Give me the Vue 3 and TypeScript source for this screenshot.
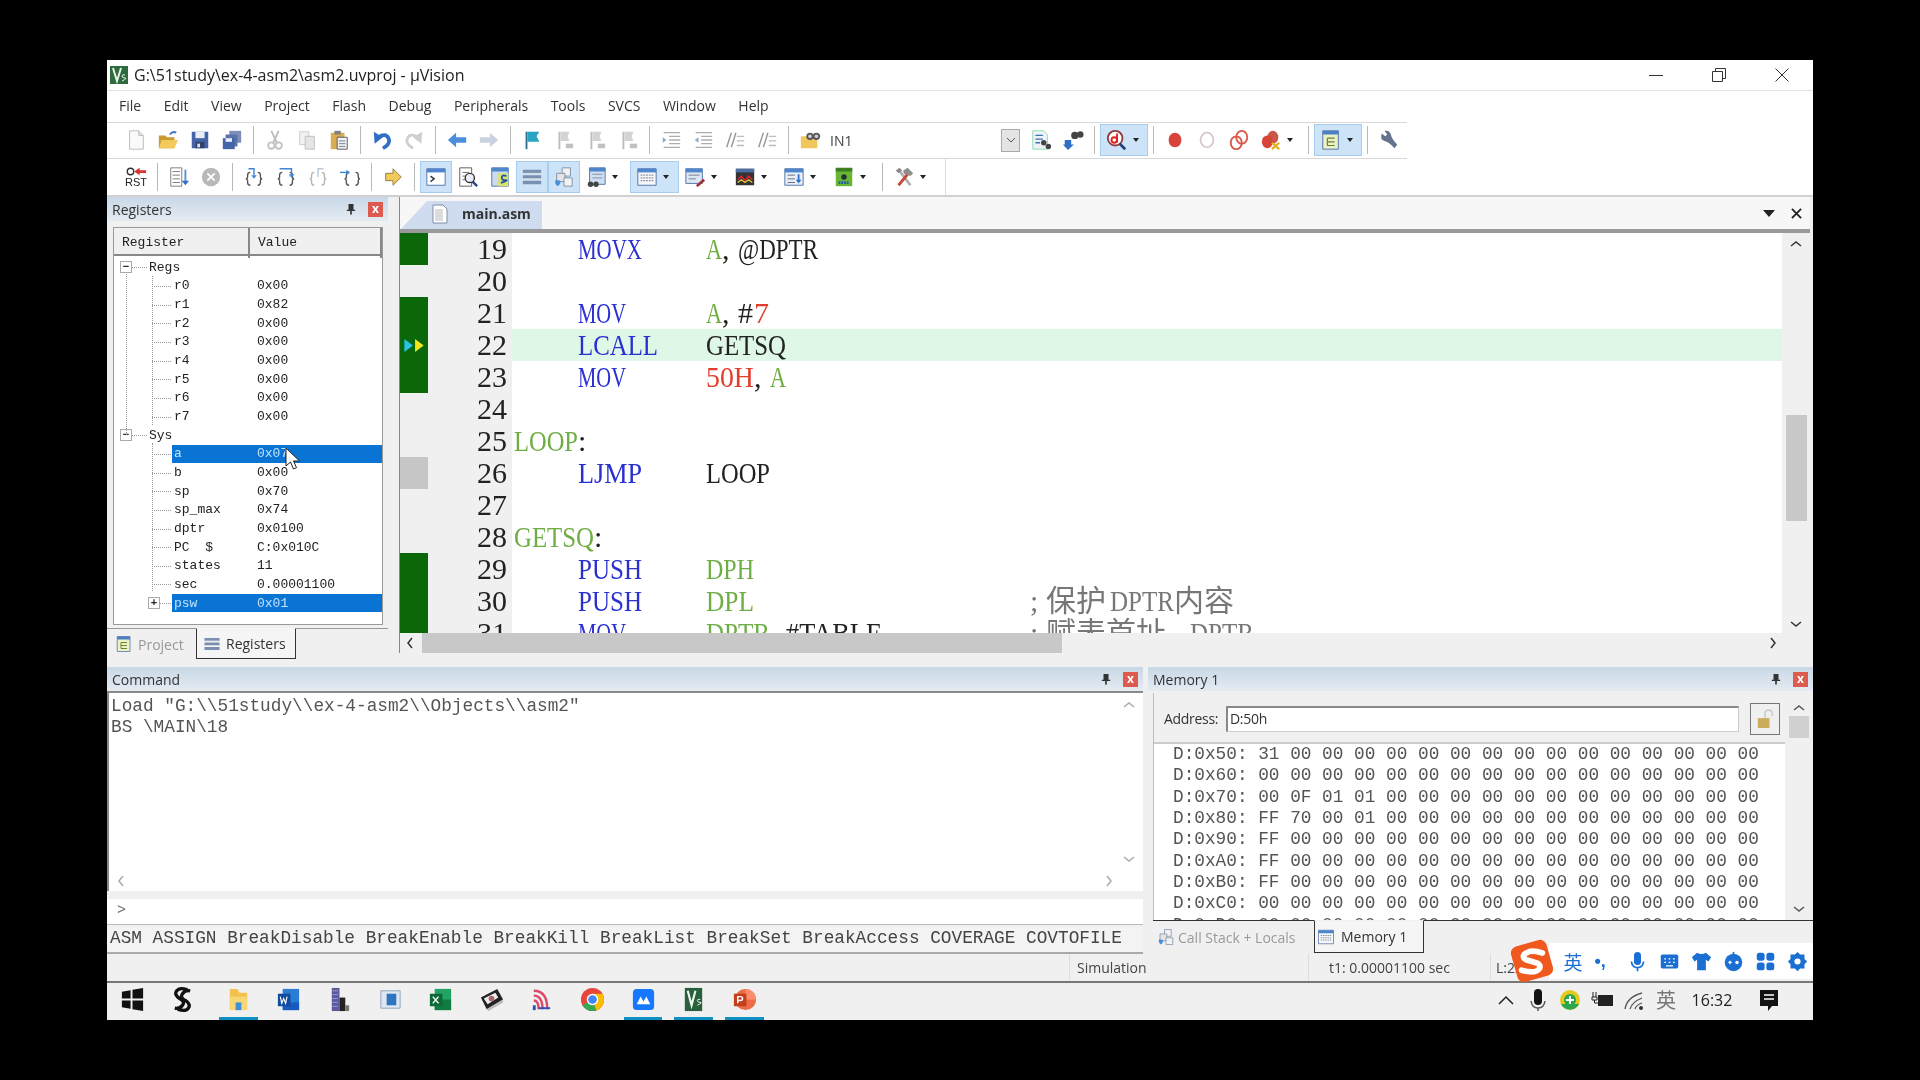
<template>
  <div class="screen">
    <!-- icon sprite -->
    <svg class="sprite" aria-hidden="true">
      <defs>
        <symbol id="new" viewBox="0 0 24 24"><path d="M5 2h10l5 5v15H5z" fill="#fafafa" stroke="#b9b9b9"/><path d="M15 2v5h5" fill="#e4e4e4" stroke="#b9b9b9"/></symbol>
        <symbol id="open" viewBox="0 0 24 24"><path d="M2 7h7l2 2h8v12H2z" fill="#c99a2e"/><path d="M5 12h18l-4 9H2z" fill="#f3c95c"/><path d="M14 6q3-4 7-2" stroke="#3b78c9" stroke-width="2" fill="none"/></symbol>
        <symbol id="save" viewBox="0 0 24 24"><path d="M3 3h18v18H3z" fill="#4564a8"/><path d="M7 3h10v7H7z" fill="#e8eef8"/><path d="M7 14h10v7H7z" fill="#30436f"/><path d="M9 16h3v4H9z" fill="#d8dfeb"/></symbol>
        <symbol id="saveall" viewBox="0 0 24 24"><path d="M9 2h13v13H9z" fill="#7d8fb8"/><path d="M5 6h13v13H5z" fill="#5a72aa"/><path d="M2 10h13v12H2z" fill="#4564a8"/><path d="M5 10h7v4H5z" fill="#e8eef8"/></symbol>
        <symbol id="cut" viewBox="0 0 24 24"><path d="M8 2l6 13M16 2l-6 13" stroke="#bdbdbd" stroke-width="2"/><circle cx="8" cy="18" r="3.500" fill="none" stroke="#c2c2c2" stroke-width="2"/><circle cx="16" cy="18" r="3.500" fill="none" stroke="#c2c2c2" stroke-width="2"/></symbol>
        <symbol id="copy" viewBox="0 0 24 24"><path d="M4 3h10v14H4z" fill="#f2f2f2" stroke="#c9c9c9"/><path d="M10 8h10v14H10z" fill="#e5e5e5" stroke="#bdbdbd"/></symbol>
        <symbol id="paste" viewBox="0 0 24 24"><path d="M3 4h15v18H3z" fill="#d9ad50"/><path d="M7 2h7v4H7z" fill="#7f7f7f"/><path d="M10 9h11v13H10z" fill="#eef1f6" stroke="#556"/><path d="M12 13h7M12 16h7M12 19h7" stroke="#778"/></symbol>
        <symbol id="undo" viewBox="0 0 24 24"><path d="M8 9q8-5 11 1t-6 11" fill="none" stroke="#2f6fc4" stroke-width="4"/><path d="M3 3l1 13 9-7z" fill="#2f6fc4"/></symbol>
        <symbol id="redo" viewBox="0 0 24 24"><path d="M16 9q-8-5-11 1t6 11" fill="none" stroke="#cfcfcf" stroke-width="3"/><path d="M21 3l-1 13-9-7z" fill="#cfcfcf"/></symbol>
        <symbol id="back" viewBox="0 0 24 24"><path d="M2 12l9-8v5h11v6H11v5z" fill="#4b8edb"/></symbol>
        <symbol id="fwd" viewBox="0 0 24 24"><path d="M22 12l-9-8v5H2v6h11v5z" fill="#c9d3df"/></symbol>
        <symbol id="flag" viewBox="0 0 24 24"><path d="M6 3v19" stroke="#2d6f8f" stroke-width="2"/><path d="M7 3h13l-3 5 3 6H7z" fill="#2ba4c4"/></symbol>
        <symbol id="flagg" viewBox="0 0 24 24"><path d="M7 3v19" stroke="#bdbdbd" stroke-width="2"/><path d="M8 3h10l-2 5 2 5H8z" fill="#d4d4d4"/><path d="M14 16h8v5h-8z" fill="#c2c2c2"/></symbol>
        <symbol id="indent" viewBox="0 0 24 24"><path d="M4 4h18M10 8h12M10 12h12M10 16h12M4 20h18" stroke="#adadad" stroke-width="1.500"/><path d="M3 9l4 3-4 3z" fill="#8aa9c9"/></symbol>
        <symbol id="outdent" viewBox="0 0 24 24"><path d="M4 4h18M10 8h12M10 12h12M10 16h12M4 20h18" stroke="#adadad" stroke-width="1.500"/><path d="M7 9l-4 3 4 3z" fill="#8aa9c9"/></symbol>
        <symbol id="slash" viewBox="0 0 24 24"><path d="M8 4L3 20M13 4L8 20" stroke="#9a9a9a" stroke-width="1.600"/><path d="M14 8h8M14 13h8M14 18h8" stroke="#bdbdbd" stroke-width="1.500"/></symbol>
        <symbol id="find" viewBox="0 0 24 24"><path d="M2 8h9l2 2h7v11H2z" fill="#f0c75a"/><circle cx="12" cy="8" r="4" fill="#555"/><circle cx="19" cy="8" r="4" fill="#555"/><circle cx="12" cy="8" r="2" fill="#ccd"/><circle cx="19" cy="8" r="2" fill="#ccd"/></symbol>
        <symbol id="docfind" viewBox="0 0 24 24"><path d="M3 2h12l4 4v16H3z" fill="#eef3fa" stroke="#8da"/><path d="M6 7h8M6 11h8M6 15h5" stroke="#3f6db2" stroke-width="1.400"/><circle cx="15" cy="15" r="3" fill="#444"/><circle cx="20" cy="19" r="3" fill="#444"/></symbol>
        <symbol id="binoc" viewBox="0 0 24 24"><path d="M3 12h7v5h3l-6.500 6L1 17h2z" fill="#2f6fc4"/><circle cx="14" cy="7" r="4" fill="#444"/><circle cx="20" cy="6" r="3.500" fill="#444"/></symbol>
        <symbol id="debug" viewBox="0 0 24 24"><circle cx="10" cy="10" r="8" fill="#fff" stroke="#8f3a3a" stroke-width="2"/><path d="M15 16l6 6" stroke="#24407d" stroke-width="3"/><circle cx="9" cy="12" r="3" fill="none" stroke="#e02020" stroke-width="2"/><path d="M12 5v10" stroke="#e02020" stroke-width="2"/></symbol>
        <symbol id="bp" viewBox="0 0 24 24"><ellipse cx="12" cy="12" rx="7" ry="8" fill="#d9443a"/></symbol>
        <symbol id="bpo" viewBox="0 0 24 24"><ellipse cx="12" cy="12" rx="7" ry="8" fill="#fff" stroke="#d8c8cc" stroke-width="2"/></symbol>
        <symbol id="bpc" viewBox="0 0 24 24"><ellipse cx="9" cy="15" rx="6" ry="7" fill="#fff" stroke="#d9574a" stroke-width="2"/><ellipse cx="15" cy="9" rx="6" ry="7" fill="none" stroke="#d9574a" stroke-width="2"/></symbol>
        <symbol id="bpx" viewBox="0 0 24 24"><ellipse cx="14" cy="9" rx="6" ry="7" fill="#c9574a"/><ellipse cx="8" cy="14" rx="6" ry="7" fill="#d9443a"/><path d="M13 15l8 7M21 15l-8 7" stroke="#e0b020" stroke-width="2.400"/></symbol>
        <symbol id="panel" viewBox="0 0 24 24"><path d="M3 2h17v20H3z" fill="#ecf1c8" stroke="#4d6fa8"/><path d="M3 2h17v4H3z" fill="#4d7fc4"/><path d="M8 10h8M8 14h8M8 18h8M8 10v8" stroke="#67822c" stroke-width="1.300"/></symbol>
        <symbol id="wrench" viewBox="0 0 24 24"><path d="M4 5l4 3 2-2-3-4q6-1 7 4t7 11l-3 4q-6-7-11-8T4 5z" fill="#64748f"/></symbol>
        <symbol id="list" viewBox="0 0 24 24"><path d="M3 2h12v20H3z" fill="#fff" stroke="#777"/><path d="M5 6h8M5 10h8M5 14h8M5 18h8" stroke="#777"/><path d="M19 4v14" stroke="#4b8edb" stroke-width="2"/><path d="M15 16h8l-4 5z" fill="#2f6fc4"/></symbol>
        <symbol id="stop" viewBox="0 0 24 24"><circle cx="12" cy="12" r="10" fill="#b9b9b9"/><path d="M8 8l8 8M16 8l-8 8" stroke="#fff" stroke-width="2"/></symbol>
        <symbol id="brace1" viewBox="0 0 24 24"><path d="M8 7q-3 0-3 3v2q0 2-2 2 2 0 2 2v2q0 3 3 3M16 7q3 0 3 3v2q0 2 2 2-2 0-2 2v2q0 3-3 3" fill="none" stroke="#555" stroke-width="1.500"/><path d="M6 3h6v7" fill="none" stroke="#3f84d6" stroke-width="1.500"/><path d="M9 10h6l-3 4z" fill="#3f84d6"/></symbol>
        <symbol id="brace2" viewBox="0 0 24 24"><path d="M8 7q-3 0-3 3v2q0 2-2 2 2 0 2 2v2q0 3 3 3M16 7q3 0 3 3v2q0 2 2 2-2 0-2 2v2q0 3-3 3" fill="none" stroke="#555" stroke-width="1.500"/><path d="M5 3h13v6" fill="none" stroke="#3f84d6" stroke-width="1.500"/><path d="M15 9h6l-3 4z" fill="#3f84d6"/></symbol>
        <symbol id="brace3" viewBox="0 0 24 24"><path d="M8 7q-3 0-3 3v2q0 2-2 2 2 0 2 2v2q0 3 3 3M16 7q3 0 3 3v2q0 2 2 2-2 0-2 2v2q0 3-3 3" fill="none" stroke="#b5b5b5" stroke-width="1.500"/><path d="M12 12V3h6" fill="none" stroke="#b8c9dc" stroke-width="1.500"/></symbol>
        <symbol id="brace4" viewBox="0 0 24 24"><path d="M11 7q-3 0-3 3v2q0 2-2 2 2 0 2 2v2q0 3 3 3M18 7q3 0 3 3v2q0 2 2 2-2 0-2 2v2q0 3-3 3" fill="none" stroke="#555" stroke-width="1.500"/><path d="M1 7h8" stroke="#3f84d6" stroke-width="1.500"/><path d="M8 4l4 3-4 3z" fill="#3f84d6"/></symbol>
        <symbol id="arrow" viewBox="0 0 24 24"><path d="M4 8h8V3l9 9-9 9v-5H4z" fill="#f0cb5c" stroke="#8f7a3a"/></symbol>
        <symbol id="cmdw" viewBox="0 0 24 24"><path d="M2 3h20v18H2z" fill="#fff" stroke="#4d6fa8"/><path d="M2 3h20v4H2z" fill="#4d86cc"/><path d="M6 11l4 3-4 3" fill="none" stroke="#333" stroke-width="1.500"/></symbol>
        <symbol id="dis" viewBox="0 0 24 24"><path d="M3 2h13v20H3z" fill="#fff" stroke="#555"/><path d="M6 7h7M6 11h7M6 15h7" stroke="#666"/><circle cx="14" cy="13" r="5" fill="#eef" stroke="#333" stroke-width="1.500"/><path d="M17 17l5 5" stroke="#24407d" stroke-width="2.500"/></symbol>
        <symbol id="sym" viewBox="0 0 24 24"><path d="M3 2h18v20H3z" fill="#cbdcf0" stroke="#4d6fa8"/><path d="M3 2h18v4H3z" fill="#4d86cc"/><path d="M10 8h11v14H10z" fill="#d8e46c"/><path d="M19 11q-5-2-5 1.500t4 3-5 3" fill="none" stroke="#2351a8" stroke-width="2"/></symbol>
        <symbol id="regs" viewBox="0 0 24 24"><path d="M2 4h20v4H2zM2 10h20v4H2zM2 16h20v4H2z" fill="#7b8fb3"/><path d="M2 8h20M2 14h20" stroke="#ddd"/></symbol>
        <symbol id="stack" viewBox="0 0 24 24"><path d="M10 2h9v9h-9z" fill="#f2f2f2" stroke="#7d8fa8"/><path d="M4 8h9v9H4z" fill="#e4e4e4" stroke="#7d8fa8"/><path d="M12 13h9v9h-9z" fill="#f2f2f2" stroke="#7d8fa8"/><path d="M3 15q-2 4 2 7 4-3 3-6z" fill="#4b8edb"/></symbol>
        <symbol id="watch" viewBox="0 0 24 24"><path d="M5 2h17v18H5z" fill="#cfe0f4" stroke="#4d6fa8"/><path d="M5 2h17v4H5z" fill="#4d86cc"/><path d="M8 9h11M8 13h11" stroke="#889"/><circle cx="6" cy="20" r="3" fill="#444"/><circle cx="12" cy="20" r="3" fill="#444"/></symbol>
        <symbol id="mem" viewBox="0 0 24 24"><path d="M2 3h20v18H2z" fill="#f7f7f7" stroke="#4d6fa8"/><path d="M2 3h20v4H2z" fill="#4d86cc"/><path d="M5 10h14M5 13h14M5 16h14" stroke="#8a94a8" stroke-dasharray="2 1" stroke-width="1.500"/></symbol>
        <symbol id="serial" viewBox="0 0 24 24"><path d="M2 3h18v16H2z" fill="#dce7f4" stroke="#4d6fa8"/><path d="M2 3h18v4H2z" fill="#4d86cc"/><path d="M5 10h12M5 14h8" stroke="#778"/><path d="M13 21l8-7 2 2-8 7z" fill="#a03030"/></symbol>
        <symbol id="ana" viewBox="0 0 24 24"><path d="M2 3h20v18H2z" fill="#333"/><path d="M2 3h20v4H2z" fill="#4d6fa8"/><path d="M4 15l4-4 4 5 4-5 4 4" fill="none" stroke="#d23" stroke-width="1.500"/><path d="M4 18l4-3 4 3 4-3 4 3" fill="none" stroke="#dc3" stroke-width="1.500"/></symbol>
        <symbol id="trace" viewBox="0 0 24 24"><path d="M2 3h20v18H2z" fill="#e7eef8" stroke="#4d6fa8"/><path d="M2 3h20v4H2z" fill="#4d86cc"/><path d="M5 10h8M5 14h8M5 18h8" stroke="#667"/><path d="M17 9v7" stroke="#2f6fc4" stroke-width="2"/><path d="M14 15h6l-3 4z" fill="#2f6fc4"/></symbol>
        <symbol id="sys" viewBox="0 0 24 24"><path d="M3 2h18v20H3z" fill="#6bb534"/><path d="M3 2h18v4H3z" fill="#3d7f22"/><circle cx="12" cy="12" r="3" fill="#233"/><path d="M6 18h12" stroke="#1f5fa8" stroke-width="3" stroke-dasharray="2 1"/></symbol>
        <symbol id="tools" viewBox="0 0 24 24"><path d="M6 4l13 17" stroke="#b0b0b0" stroke-width="3"/><path d="M3 5l4-3 3 3-4 3z" fill="#8b8b8b"/><path d="M16 9L6 21" stroke="#c9483d" stroke-width="3"/><path d="M11 5l5-3 6 6-3 3-4-2-3 0z" fill="#8f8f8f"/></symbol>
        <symbol id="rst" viewBox="0 0 24 24"><circle cx="6" cy="6" r="3.500" fill="#fff" stroke="#333" stroke-width="1.500"/><path d="M10 6l6-4v2.500h7v3h-7V10z" fill="#d9342b"/><text x="0" y="22" font-size="11" font-family="Liberation Sans, sans-serif" fill="#222" textLength="24" lengthAdjust="spacingAndGlyphs">RST</text></symbol>
        <symbol id="doc" viewBox="0 0 16 20"><path d="M1 1h10l4 4v14H1z" fill="#fff" stroke="#7d8fa8"/><path d="M3 5h8v12H3z" fill="#dcdcdc"/></symbol>
        <symbol id="pin" viewBox="0 0 12 14"><path d="M3 1h6v7h2v1.500H7V14H5V9.500H1V8h2z" fill="#333"/></symbol>
      </defs>
    </svg>

    <div class="window">
      <div class="titlebar">
        <svg class="app-icon" viewBox="0 0 18 18"><path d="M0 0h18v18H0z" fill="#2e6b3c"/><path d="M3 2l4 13 4-13" fill="none" stroke="#e8f2e8" stroke-width="2"/><path d="M15 9q-3-1-3 1t3 2-3 3" fill="none" stroke="#e8f2e8"/></svg>
        <span class="title">G:\51study\ex-4-asm2\asm2.uvproj - µVision</span>
        <div class="win-ctrls">
          <svg viewBox="0 0 14 14"><path d="M0 7.500h14" stroke="#333"/></svg>
          <svg viewBox="0 0 14 14"><path d="M.5 3.500h10v10H.5zM3.500 3.500v-3h10v10h-3" fill="none" stroke="#333"/></svg>
          <svg viewBox="0 0 14 14"><path d="M.5.500l13 13M13.500.500l-13 13" stroke="#333"/></svg>
        </div>
      </div>

      <div class="menubar">
        <span v-for="m in menus" :key="m">{{ m }}</span>
      </div>

      <div class="toolbars">
        <div class="toolbar t1">
          <template v-for="(it, i) in toolbar1" :key="i">
            <i v-if="it.icon === '|'" class="tb-sep"></i>
            <div v-else-if="it.icon === 'combo'" class="combo">
              <svg class="tb-find" viewBox="0 0 24 24"><use href="#find" /></svg>
              <span class="combo-text">IN1</span>
              <span class="combo-drop"><svg viewBox="0 0 10 6"><path d="M1 1l4 4 4-4" fill="none" stroke="#555"/></svg></span>
            </div>
            <div v-else class="tb-btn" :class="{ on: it.on, drop: it.drop }">
              <svg viewBox="0 0 24 24"><use :href="'#' + it.icon" /></svg>
              <b v-if="it.drop" class="caret"></b>
            </div>
          </template>
        </div>
        <div class="toolbar t2">
          <template v-for="(it, i) in toolbar2" :key="i">
            <i v-if="it.icon === '|'" class="tb-sep"></i>
            <div v-else class="tb-btn" :class="{ on: it.on, drop: it.drop }">
              <svg viewBox="0 0 24 24"><use :href="'#' + it.icon" /></svg>
              <b v-if="it.drop" class="caret"></b>
            </div>
          </template>
        </div>
      </div>

      <div class="main">
        <div class="left">
          <div class="dock-head">
            <span>Registers</span>
            <svg class="pin" viewBox="0 0 12 14"><use href="#pin" /></svg>
            <span class="dock-x">x</span>
          </div>
          <div class="reg-table">
            <div class="reg-head"><span>Register</span><span>Value</span></div>
            <div class="reg-tree">
              <div v-for="r in regs" :key="r.name" class="reg-row" :class="[r.kind, { sel: r.sel }]">
                <span v-if="r.kind === 'group' || r.kind === 'closed'" class="box">{{ r.kind === 'group' ? '−' : '+' }}</span>
                <span class="reg-name">{{ r.name }}</span>
                <span class="reg-val">{{ r.value }}</span>
              </div>
              <i class="vline v1"></i>
              <i class="vline v2"></i>
              <i class="vline v3"></i>
              <svg class="cursor" viewBox="0 0 16 24"><path d="M1 1v18l4.500-4 3 7 3-1.300-3-6.700h6z" fill="#fff" stroke="#222"/></svg>
            </div>
          </div>
          <div class="left-tabs">
            <div class="ltab">
              <svg viewBox="0 0 24 24"><use href="#panel" /></svg>Project
            </div>
            <div class="ltab active">
              <svg viewBox="0 0 24 24"><use href="#regs" /></svg>Registers
            </div>
          </div>
        </div>

        <div class="editor">
          <div class="tabstrip">
            <div class="file-tab">
              <svg viewBox="0 0 16 20"><use href="#doc" /></svg>
              <span>main.asm</span>
            </div>
            <div class="strip-ctrls">
              <svg viewBox="0 0 12 7"><path d="M0 0h12L6 7z" fill="#222" /></svg>
              <svg viewBox="0 0 12 12"><path d="M1 1l10 10M11 1L1 11" stroke="#222" stroke-width="2" /></svg>
            </div>
          </div>
          <div class="edit-body">
            <div class="code">
              <div v-for="l in lines" :key="l.n" class="line" :class="{ cur: l.cur }">
                <div class="mark" :class="l.mark">
                  <template v-if="l.cur">
                    <svg viewBox="0 0 20 14"><path d="M1 1l8 6-8 6z" fill="#27c4e8" /><path d="M11 1l8 6-8 6z" fill="#f4e61c" /></svg>
                  </template>
                </div>
                <div class="num"><span class="tok" :style="fit(String(l.n))">{{ l.n }}</span></div>
                <div class="src">
                  <template v-if="l.label">
                    <span v-for="t in l.label" :key="t[0]" class="tok" :class="t[1]" :style="fit(t[0])">{{ t[0] }}</span>
                  </template>
                  <template v-else-if="l.op">
                    <div class="col-op"><span class="tok kw" :style="fit(l.op)">{{ l.op }}</span></div>
                    <div class="col-args"><span v-for="t in l.args" :key="t[0]" class="tok" :class="t[1]" :style="fit(t[0])">{{ t[0] }}</span></div>
                    <div class="col-note"><span v-for="t in l.note" :key="t" class="tok note" :style="fit(t)">{{ t }}</span></div>
                  </template>
                </div>
              </div>
            </div>
            <div class="vscroll big">
              <svg class="chev-v" viewBox="0 0 12 8"><path d="M1 6l5-4 5 4" fill="none" stroke="#333" stroke-width="1.500" /></svg>
              <div class="v-track"><div class="v-thumb"></div></div>
              <svg class="chev-v" viewBox="0 0 12 8"><path d="M1 2l5 4 5-4" fill="none" stroke="#333" stroke-width="1.500" /></svg>
            </div>
          </div>
          <div class="hscroll big">
            <svg class="chev" viewBox="0 0 8 12"><path d="M6 1L2 6l4 5" fill="none" stroke="#333" stroke-width="1.500" /></svg>
            <div class="h-track"><div class="h-thumb"></div></div>
            <svg class="chev" viewBox="0 0 8 12"><path d="M2 1l4 5-4 5" fill="none" stroke="#333" stroke-width="1.500" /></svg>
          </div>
        </div>
      </div>

      <div class="bottom">
        <div class="cmd">
          <div class="dock-head">
            <span>Command</span>
            <svg class="pin" viewBox="0 0 12 14"><use href="#pin" /></svg>
            <span class="dock-x">x</span>
          </div>
          <div class="cmd-output">
            <div class="cmd-body">
              <div class="cmd-text">
                <div>Load "G:\\51study\\ex-4-asm2\\Objects\\asm2"</div>
                <div>BS \MAIN\18</div>
              </div>
              <div class="vscroll thin">
                <svg class="chev-v" viewBox="0 0 12 8"><path d="M1 6l5-4 5 4" fill="none" stroke="#aaa" stroke-width="1.500" /></svg>
                <svg class="chev-v" viewBox="0 0 12 8"><path d="M1 2l5 4 5-4" fill="none" stroke="#aaa" stroke-width="1.500" /></svg>
              </div>
            </div>
            <div class="hscroll thin">
              <svg class="chev" viewBox="0 0 8 12"><path d="M6 1L2 6l4 5" fill="none" stroke="#aaa" stroke-width="1.500" /></svg>
              <svg class="chev" viewBox="0 0 8 12"><path d="M2 1l4 5-4 5" fill="none" stroke="#aaa" stroke-width="1.500" /></svg>
            </div>
          </div>
          <div class="cmd-input">&gt;</div>
          <div class="cmd-funcs">ASM ASSIGN BreakDisable BreakEnable BreakKill BreakList BreakSet BreakAccess COVERAGE COVTOFILE</div>
        </div>

        <div class="memory">
          <div class="dock-head">
            <span>Memory 1</span>
            <svg class="pin" viewBox="0 0 12 14"><use href="#pin" /></svg>
            <span class="dock-x">x</span>
          </div>
          <div class="mem-box">
            <div class="mem-main">
              <div class="mem-addr">
                <label>Address:</label>
                <div class="addr-input">D:50h</div>
                <div class="lock">
                  <svg viewBox="0 0 20 24"><path d="M10 11V6q0-4 4-4t4 4v3" fill="none" stroke="#cfcfcf" stroke-width="2" /><path d="M2 11h13v11H2z" fill="#c9ad5c" /></svg>
                </div>
              </div>
              <div class="mem-rows">
                <div v-for="r in memRows" :key="r">{{ r }}</div>
              </div>
            </div>
            <div class="vscroll mem">
              <svg class="chev-v" viewBox="0 0 12 8"><path d="M1 6l5-4 5 4" fill="none" stroke="#555" stroke-width="1.500" /></svg>
              <div class="v-track"><div class="v-thumb"></div></div>
              <svg class="chev-v" viewBox="0 0 12 8"><path d="M1 2l5 4 5-4" fill="none" stroke="#555" stroke-width="1.500" /></svg>
            </div>
          </div>
          <div class="mem-tabs">
            <div class="ltab">
              <svg viewBox="0 0 24 24"><use href="#stack" /></svg>Call Stack + Locals
            </div>
            <div class="ltab active">
              <svg viewBox="0 0 24 24"><use href="#mem" /></svg>Memory 1
            </div>
          </div>
        </div>
      </div>

      <div class="status">
        <span class="st sim">Simulation</span>
        <span class="st t1s">t1: 0.00001100 sec</span>
        <span class="st ln">L:22</span>
      </div>

      <div class="taskbar">
        <div class="apps">
          <div v-for="a in apps" :key="a.id" class="app" :class="{ running: a.running, gap: a.id === 'folder' }">
            <svg viewBox="0 0 28 28" v-html="a.svg"></svg>
          </div>
        </div>
        <div class="tray">
          <svg class="tray-i" viewBox="0 0 24 24"><path d="M5 16l7-7 7 7" fill="none" stroke="#222" stroke-width="1.500" /></svg>
          <svg class="tray-i" viewBox="0 0 24 24"><rect x="8" y="1" width="8" height="16" rx="4" fill="#111" /><path d="M5 13q1 7 7 7t7-7M12 20v3" fill="none" stroke="#555" stroke-width="1.500" /></svg>
          <svg class="tray-i" viewBox="0 0 24 24"><circle cx="12" cy="12" r="10" fill="#e7c81f" /><path d="M3 16a10 10 0 0 0 18 0z" fill="#2aa84a" /><circle cx="12" cy="12" r="6" fill="#2aa84a" /><path d="M12 8v8M8 12h8" stroke="#fff" stroke-width="2" /></svg>
          <svg class="tray-i" viewBox="0 0 24 24"><path d="M8 7h15v11H8z" fill="#222" /><path d="M3 4v5M6 4v5M2 9h5v3H2zM4.500 12v3h4" fill="none" stroke="#222" /></svg>
          <svg class="tray-i" viewBox="0 0 24 24"><path d="M3 21Q5 9 20 5M8 21q2-7 12-11M13 21q1-4 7-6" fill="none" stroke="#555" stroke-width="1.300" /><circle cx="19" cy="20" r="2" fill="#333" /></svg>
          <span class="tray-cn">英</span>
          <span class="clock">16:32</span>
          <svg class="tray-n" viewBox="0 0 24 24"><path d="M3 2h18v16h-6l-4 5v-5H3z" fill="#111" /><path d="M7 7h10M7 11h10" stroke="#fff" stroke-width="1.500" /></svg>
        </div>
      </div>

      <!-- Sogou input bar lying over the status bar -->
      <div class="ime">
        <svg class="ime-logo" viewBox="0 0 40 40">
          <rect x="4" y="4" width="32" height="32" rx="6" fill="#f0591e" transform="rotate(-16 20 20)" />
          <path d="M29 13q-9-3-14 0t0 6l10 3q4 3 0 6t-14 0" fill="none" stroke="#fff" stroke-width="5" stroke-linecap="round" />
        </svg>
        <div class="ime-bar">
          <span class="ime-cn">英</span>
          <span class="ime-p">•,</span>
          <svg viewBox="0 0 24 24"><rect x="8" y="1" width="8" height="15" rx="4" /><path d="M5 12q1 7 7 7t7-7M12 19v4" fill="none" stroke="#1b6fd2" stroke-width="2" /></svg>
          <svg viewBox="0 0 24 24"><rect x="2" y="4" width="20" height="16" rx="2" /><path d="M6 9h2M11 9h2M16 9h2M6 13h2M11 13h2M16 13h2M8 17h8" stroke="#fff" stroke-width="1.500" /></svg>
          <svg viewBox="0 0 24 24"><path d="M7 2L1 7l3 5 3-2v12h10V10l3 2 3-5-6-5q-5 3-10 0z" /></svg>
          <svg viewBox="0 0 24 24"><circle cx="12" cy="13" r="10" /><path d="M12 1v3" stroke="#1b6fd2" stroke-width="2" /><path d="M6 13h4M8 11v4" stroke="#fff" stroke-width="1.500" /><circle cx="16" cy="13" r="2" fill="#fff" /></svg>
          <svg viewBox="0 0 24 24"><rect x="2" y="2" width="9" height="9" rx="3" /><rect x="13" y="2" width="9" height="9" rx="3" /><rect x="2" y="13" width="9" height="9" rx="3" /><rect x="13" y="13" width="9" height="9" rx="3" /></svg>
          <svg viewBox="0 0 24 24"><path d="M12 1l3 3h5v5l3 3-3 3v5h-5l-3 3-3-3H4v-5l-3-3 3-3V4h5z" /><circle cx="12" cy="12" r="3.500" fill="#fff" /></svg>
        </div>
      </div>
    </div>
  </div>
</template>

<script setup lang="ts">
type Tok = [string, string]

interface Item {
  icon: string
  on?: boolean
  drop?: boolean
}

interface CodeLine {
  n: number
  mark?: string
  cur?: boolean
  label?: Tok[]
  op?: string
  args?: Tok[]
  note?: string[]
}

const menus = ['File', 'Edit', 'View', 'Project', 'Flash', 'Debug', 'Peripherals', 'Tools', 'SVCS', 'Window', 'Help']

const toolbar1: Item[] = [
  { icon: 'new' }, { icon: 'open' }, { icon: 'save' }, { icon: 'saveall' }, { icon: '|' },
  { icon: 'cut' }, { icon: 'copy' }, { icon: 'paste' }, { icon: '|' },
  { icon: 'undo' }, { icon: 'redo' }, { icon: '|' },
  { icon: 'back' }, { icon: 'fwd' }, { icon: '|' },
  { icon: 'flag' }, { icon: 'flagg' }, { icon: 'flagg' }, { icon: 'flagg' }, { icon: '|' },
  { icon: 'indent' }, { icon: 'outdent' }, { icon: 'slash' }, { icon: 'slash' }, { icon: '|' },
  { icon: 'combo' },
  { icon: 'docfind' }, { icon: 'binoc' }, { icon: '|' },
  { icon: 'debug', on: true, drop: true }, { icon: '|' },
  { icon: 'bp' }, { icon: 'bpo' }, { icon: 'bpc' }, { icon: 'bpx', drop: true }, { icon: '|' },
  { icon: 'panel', on: true, drop: true }, { icon: '|' },
  { icon: 'wrench' },
]

const toolbar2: Item[] = [
  { icon: 'rst' }, { icon: '|' },
  { icon: 'list' }, { icon: 'stop' }, { icon: '|' },
  { icon: 'brace1' }, { icon: 'brace2' }, { icon: 'brace3' }, { icon: 'brace4' }, { icon: '|' },
  { icon: 'arrow' }, { icon: '|' },
  { icon: 'cmdw', on: true }, { icon: 'dis' }, { icon: 'sym' }, { icon: 'regs', on: true }, { icon: 'stack', on: true },
  { icon: 'watch', drop: true }, { icon: 'mem', on: true, drop: true }, { icon: 'serial', drop: true },
  { icon: 'ana', drop: true }, { icon: 'trace', drop: true }, { icon: 'sys', drop: true }, { icon: '|' },
  { icon: 'tools', drop: true },
]

const regs = [
  { name: 'Regs', value: '', kind: 'group' },
  ...['0x00', '0x82', '0x00', '0x00', '0x00', '0x00', '0x00', '0x00'].map((value, i) => ({ name: `r${i}`, value, kind: 'leaf' })),
  { name: 'Sys', value: '', kind: 'group' },
  { name: 'a', value: '0x07', kind: 'leaf', sel: true },
  { name: 'b', value: '0x00', kind: 'leaf' },
  { name: 'sp', value: '0x70', kind: 'leaf' },
  { name: 'sp_max', value: '0x74', kind: 'leaf' },
  { name: 'dptr', value: '0x0100', kind: 'leaf' },
  { name: 'PC  $', value: 'C:0x010C', kind: 'leaf' },
  { name: 'states', value: '11', kind: 'leaf' },
  { name: 'sec', value: '0.00001100', kind: 'leaf' },
  { name: 'psw', value: '0x01', kind: 'closed', sel: true },
]

const lines: CodeLine[] = [
  { n: 19, mark: 'g', op: 'MOVX', args: [['A', 'grn'], [',', ''], ['@DPTR', '']] },
  { n: 20 },
  { n: 21, mark: 'g', op: 'MOV', args: [['A', 'grn'], [',', ''], ['#', ''], ['7', 'red']] },
  { n: 22, mark: 'g', cur: true, op: 'LCALL', args: [['GETSQ', '']] },
  { n: 23, mark: 'g', op: 'MOV', args: [['50H', 'red'], [',', ''], ['A', 'grn']] },
  { n: 24 },
  { n: 25, label: [['LOOP', 'grn'], [':', '']] },
  { n: 26, mark: 'k', op: 'LJMP', args: [['LOOP', '']] },
  { n: 27 },
  { n: 28, label: [['GETSQ', 'grn'], [':', '']] },
  { n: 29, mark: 'g', op: 'PUSH', args: [['DPH', 'grn']] },
  { n: 30, mark: 'g', op: 'PUSH', args: [['DPL', 'grn']], note: [';', '保护', 'DPTR', '内容'] },
  { n: 31, mark: 'g', op: 'MOV', args: [['DPTR', 'grn'], [',', ''], ['#TABLE', '']], note: [';', '赋表首址', '→', 'DPTR'] },
]

// The editor font is a narrow serif on a 16px cell: squeeze each token to its cell width
const CELL = 16
const ctx = document.createElement('canvas').getContext('2d')!
ctx.font = '30px "Liberation Serif", "Noto Sans CJK SC", serif'

const fit = (text: string) => {
  const cells = [...text].reduce((n, ch) => n + (ch.charCodeAt(0) > 0x2e80 ? 2 : 1), 0)
  const width = cells * CELL
  const k = Math.min(1, width / ctx.measureText(text).width)
  return { width: `${width}px`, transform: `scaleX(${k.toFixed(3)})` }
}

const memData: Record<string, string[]> = {
  '50': ['31'],
  '60': ['00'],
  '70': ['00', '0F', '01', '01'],
  '80': ['FF', '70', '00', '01'],
  '90': ['FF'],
  A0: ['FF'],
  B0: ['FF'],
  C0: ['00'],
  D0: ['00'],
}

const memRows = Object.keys(memData)
  .sort()
  .map((k) => {
    const bytes = Array.from({ length: 16 }, (_, i) => memData[k][i] ?? '00')
    return `D:0x${k}: ${bytes.join(' ')}`
  })

const apps = [
  { id: 'win', svg: '<path d="M3 6l9-1.500V13H3zM14 4l11-2v11H14zM3 15h9v8.500L3 22zM14 15h11v11l-11-2z" fill="#111"/>' },
  { id: 'swirl', svg: '<path d="M19 4q-8-3-11 1t3 8q6 3 3 7t-8 3M9 24q8 3 11-1t-3-8q-6-3-3-7t8-3" fill="none" stroke="#111" stroke-width="3.500"/>' },
  { id: 'folder', running: true, svg: '<path d="M5 3h8l2 4h8v18H5z" fill="#f2c14e"/><path d="M5 11h18v14H5z" fill="#f7d774"/><path d="M11 17h6v8h-6z" fill="#3f8fd2"/>' },
  { id: 'word', svg: '<path d="M8 3h17v22H8z" fill="#2b7cd3"/><path d="M8 17h17v8H8z" fill="#185abd"/><path d="M3 8h13v13H3z" fill="#124a9e"/><path d="M5.500 11l1.500 7 2-5 2 5 1.500-7" fill="none" stroke="#fff" stroke-width="1.200"/>' },
  { id: 'tower', svg: '<path d="M6 2h8v24H6z" fill="#5a5a9c"/><path d="M14 12h6v14h-6z" fill="#222"/><path d="M20 20h4v6h-4z" fill="#777"/><path d="M7 5h6M7 9h6M7 13h6M7 17h6M7 21h6" stroke="#ddd" stroke-dasharray="1 1"/>' },
  { id: 'box', svg: '<path d="M4 5h20v18H4z" fill="#dfe8f2" stroke="#8ea4bb"/><path d="M10 8h10v12H10z" fill="#2f74c0"/>' },
  { id: 'excel', svg: '<path d="M8 3h17v22H8z" fill="#21a366"/><path d="M8 14h17v11H8z" fill="#107c41"/><path d="M3 8h13v13H3z" fill="#0b6a35"/><path d="M6 11l6 7M12 11l-6 7" stroke="#fff" stroke-width="1.500"/>' },
  { id: 'camera', svg: '<path d="M3 12L20 3l6 11-17 10z" fill="#222"/><path d="M6 13l12-6 3 5-11 7z" fill="#eee"/><circle cx="14" cy="13" r="3" fill="#a66"/><path d="M9 24l17-10v3L11 26z" fill="#bbb"/>' },
  { id: 'rss', svg: '<path d="M6 5q14 0 14 19M6 10q9 0 9 14M6 15q5 0 5 9" fill="none" stroke="#e0486a" stroke-width="2.500"/><path d="M5 20h3v5H5z" fill="#2f4fb8"/><path d="M11 23h12" stroke="#2f4fb8" stroke-width="2"/>' },
  { id: 'chrome', svg: '<circle cx="14" cy="14" r="12" fill="#e8453c"/><path d="M14 14L3.600 20a12 12 0 0 0 14.500 5.300z" fill="#34a853"/><path d="M14 14l4 11.300A12 12 0 0 0 24.400 8H14z" fill="#fbbc05"/><circle cx="14" cy="14" r="6" fill="#fff"/><circle cx="14" cy="14" r="4.500" fill="#4285f4"/>' },
  { id: 'blue', running: true, svg: '<rect x="3" y="3" width="22" height="22" rx="4" fill="#1677ff"/><path d="M7 19l4-8 3 5 3-5 4 8" fill="#fff"/>' },
  { id: 'keil', running: true, svg: '<rect x="5" y="2" width="18" height="24" fill="#27603a"/><path d="M8 5l4 15 4-15" fill="none" stroke="#eef5ef" stroke-width="2.200"/><path d="M21 14q-3-1-3 1t3 2-3 3" fill="none" stroke="#eef5ef"/>' },
  { id: 'ppt', running: true, svg: '<circle cx="15" cy="14" r="11" fill="#ed6c47"/><path d="M15 3a11 11 0 0 1 11 11H15z" fill="#ff8f6b"/><rect x="3" y="8" width="13" height="13" fill="#c43e1c"/><path d="M7 18v-7h3a2 2 0 0 1 0 4H7" fill="none" stroke="#fff" stroke-width="1.500"/>' },
]
</script>

<style>
html,
body {
  margin: 0;
  background: #000;
}
</style>

<style scoped>
.screen {
  width: 1920px;
  height: 1080px;
  box-sizing: border-box;
  padding: 60px 107px;
  background: #000;
  overflow: hidden;
  font-family: "Open Sans", "Liberation Sans", sans-serif;
}
.sprite { position: absolute; width: 0; height: 0; }
.window {
  position: relative;
  width: 1706px;
  height: 960px;
  background: #f0f0f0;
  display: flex;
  flex-direction: column;
  overflow: hidden;
  filter: blur(0.35px);
}

/* title + menu */
.titlebar {
  height: 30px;
  background: #fff;
  display: flex;
  align-items: center;
  padding-left: 3px;
  font-size: 16px;
  color: #222;
}
.app-icon { width: 18px; height: 18px; margin-right: 6px; }
.win-ctrls { margin-left: auto; display: flex; gap: 49px; padding-right: 24px; }
.win-ctrls svg { width: 14px; height: 14px; }
.menubar {
  height: 32px;
  background: #fff;
  border-top: 1px solid #e2e2e2;
  box-sizing: border-box;
  display: flex;
  align-items: center;
  gap: 22.500px;
  padding: 0 0 2px 12px;
  font-size: 14px;
  color: #333;
}

/* toolbars */
.toolbars {
  height: 75px;
  background: #fff;
  border-bottom: 2px solid #d0d0d0;
  box-sizing: border-box;
  display: flex;
  flex-direction: column;
}
.toolbar {
  height: 36.500px;
  flex: none;
  display: flex;
  align-items: center;
  padding-left: 13px;
  box-sizing: border-box;
  border-top: 1px solid #d8d8d8;
}
.t1 { width: 1300px; border-bottom: 1px solid #d8d8d8; }
.t2 { width: 839px; border-right: 1px solid #ddd; border-top: 0; }
.tb-sep { width: 1px; height: 28px; background: #b8b8b8; margin: 0 5px 0 5px; flex: none; }
.tb-btn {
  width: 32px;
  height: 32px;
  flex: none;
  display: flex;
  align-items: center;
  justify-content: center;
  box-sizing: border-box;
}
.tb-btn svg { width: 22px; height: 22px; flex: none; }
.tb-btn.drop { width: 48px; gap: 5px; justify-content: flex-start; padding-left: 5px; }
.t2 .tb-btn.drop { width: 49.500px; }
.tb-btn.on { background: #cde4f8; border: 1px solid #a9cdec; }
.caret {
  width: 0;
  height: 0;
  border: 3.500px solid transparent;
  border-top: 4px solid #222;
  border-bottom: 0;
}
.combo { display: flex; align-items: center; flex: none; width: 231px; }
.tb-find { width: 22px; height: 22px; margin-left: 5px; }
.combo-text { margin-left: 9px; font-size: 14px; color: #444; }
.combo-drop {
  margin-left: auto;
  width: 19px;
  height: 23px;
  margin-right: 5px;
  background: #e4e4e4;
  border: 1px solid #aaa;
  display: flex;
  align-items: center;
  justify-content: center;
  box-sizing: border-box;
}
.combo-drop svg { width: 10px; height: 6px; }

/* main row */
.main {
  height: 465px;
  display: flex;
  flex: none;
  background: #f0f0f0;
}
.left { width: 281px; flex: none; display: flex; flex-direction: column; }
.dock-head {
  height: 24px;
  flex: none;
  display: flex;
  align-items: center;
  padding: 0 5px;
  background: linear-gradient(#c9d8e6, #e4ebf2);
  font-size: 14px;
  color: #333;
}
.pin { width: 10px; height: 12px; margin-left: auto; margin-right: 12px; }
.dock-x {
  width: 15px;
  height: 15px;
  background: #dc5a4e;
  color: #fff;
  font-size: 12px;
  font-weight: 700;
  line-height: 13px;
  text-align: center;
}

.reg-table {
  margin: 6px 5px 0 6px;
  height: 398px;
  background: #fff;
  border: 1px solid #999;
  box-sizing: border-box;
  display: flex;
  flex-direction: column;
}
.reg-head {
  height: 26px;
  flex: none;
  display: grid;
  grid-template-columns: 136px 1fr;
  background: #f0f0f0;
  border-bottom: 2px solid #888;
  font-family: "Liberation Mono", monospace;
  font-size: 13px;
  line-height: 30px;
  color: #222;
}
.reg-head span { padding-left: 8px; border-right: 2px solid #888; }
.reg-tree { position: relative; flex: 1; padding-top: 2px; }
.reg-row {
  position: relative;
  height: 18.670px;
  display: flex;
  align-items: center;
  font-family: "Liberation Mono", monospace;
  font-size: 13px;
  color: #222;
  white-space: pre;
}
.reg-name { margin-left: 60px; width: 83px; flex: none; }
.reg-val { flex: none; }
.reg-row.group .reg-name { margin-left: 35px; width: auto; }
.reg-row.sel::after {
  content: "";
  position: absolute;
  inset: 0 0 0 58px;
  background: #0a74d4;
  z-index: 0;
}
.reg-row.sel .reg-name,
.reg-row.sel .reg-val { position: relative; z-index: 1; color: #bfe3ff; }
.reg-row.leaf::before,
.reg-row.closed::before {
  content: "";
  position: absolute;
  left: 38px;
  width: 19px;
  top: 50%;
  border-top: 1px dotted #999;
}
.reg-row.group::before {
  content: "";
  position: absolute;
  left: 18px;
  width: 15px;
  top: 50%;
  border-top: 1px dotted #999;
}
.box {
  position: absolute;
  left: 6px;
  width: 12px;
  height: 12px;
  box-sizing: border-box;
  border: 1px solid #aaa;
  background: #fff;
  font: 700 11px/9px "Liberation Sans", sans-serif;
  text-align: center;
  color: #222;
}
.reg-row.closed .box { left: 34px; z-index: 1; }
.vline { position: absolute; border-left: 1px dotted #999; }
.v1 { left: 12px; top: 18px; height: 161px; }
.v2 { left: 38px; top: 20px; height: 149px; }
.v3 { left: 38px; top: 187px; height: 148px; }
.cursor { position: absolute; left: 171px; top: 191px; width: 16px; height: 24px; z-index: 2; }

.left-tabs {
  display: flex;
  align-items: stretch;
  height: 31px;
  margin-top: 3px;
  padding-left: 5px;
  flex: none;
  border-top: 1px solid #999;
  box-sizing: border-box;
}
.ltab {
  display: flex;
  align-items: center;
  gap: 5px;
  padding: 0 6px 0 3px;
  font-size: 14px;
  color: #999;
  white-space: nowrap;
}
.ltab svg { width: 18px; height: 18px; }
.ltab.active {
  color: #333;
  margin-top: -1px;
  background: #f5f5f5;
  border: 1px solid #333;
  border-top-color: #f5f5f5;
}
.left-tabs .ltab { width: 78px; box-sizing: border-box; }
.left-tabs .ltab.active { width: 100px; margin-left: 6px; padding-left: 6px; }

/* editor */
.editor {
  margin: 0 3px 0 11px;
  flex: 1;
  min-width: 0;
  display: flex;
  flex-direction: column;
  height: 456px;
  border-left: 1px solid #888;
}
.tabstrip {
  height: 32px;
  flex: none;
  display: flex;
  align-items: flex-end;
  background: #f7f7f7;
  border-bottom: 4px solid #999;
}
.file-tab {
  margin-left: 1px;
  width: 141px;
  height: 28px;
  box-sizing: border-box;
  padding: 0 0 3px 31px;
  display: flex;
  align-items: center;
  gap: 14px;
  background: #cfdcf0;
  clip-path: polygon(0 100%, 26px 0, 100% 0, 100% 100%);
  font-size: 14px;
  font-weight: 700;
  color: #333;
}
.file-tab svg { width: 16px; height: 20px; }
.strip-ctrls { margin-left: auto; display: flex; gap: 16px; align-items: center; padding-right: 8px; height: 100%; }
.strip-ctrls svg:first-child { width: 12px; height: 7px; }
.strip-ctrls svg:last-child { width: 11px; height: 11px; }
.edit-body { flex: 1; min-height: 0; display: flex; }
.code {
  flex: 1;
  min-width: 0;
  overflow: hidden;
  background: #fff;
  font-family: "Liberation Serif", "Noto Sans CJK SC", serif;
  font-size: 30px;
  color: #222;
}
.line { height: 32px; display: flex; line-height: 32px; white-space: nowrap; }
.mark { width: 28px; flex: none; background: #f0f0f0; display: flex; align-items: center; justify-content: center; }
.mark.g { background: #0a680a; }
.mark.k { background: #c6c6c6; }
.mark svg { width: 22px; height: 15px; }
.num {
  width: 84px;
  flex: none;
  box-sizing: border-box;
  padding-right: 3px;
  background: #f0f0f0;
  text-align: right;
}
.src { flex: 1; min-width: 0; display: flex; padding-left: 2px; }
.line.cur .src { background: #dff7e6; }
.col-op { width: 128px; margin-left: 64px; flex: none; }
.col-args { width: 324px; flex: none; }
.col-note { flex: none; }
.tok {
  display: inline-block;
  text-align: left;
  transform-origin: 0 50%;
  white-space: nowrap;
  overflow: visible;
}
.kw { color: #2a2fd0; }
.grn { color: #6fae45; }
.red { color: #e23e2e; }
.note { color: #777; }

.hscroll { display: flex; align-items: center; flex: none; }
.hscroll.big { height: 20px; background: #f0f0f0; padding: 0 33px 0 6px; gap: 8px; }
.chev { width: 8px; height: 12px; flex: none; }
.h-track { flex: 1; height: 100%; }
.h-thumb { width: 640px; height: 100%; background: #c8c8c8; }
.vscroll { display: flex; flex-direction: column; align-items: center; flex: none; }
.vscroll.big { width: 28px; padding: 7px 0 5px; background: #f0f0f0; gap: 6px; box-sizing: border-box; }
.chev-v { width: 12px; height: 8px; flex: none; }
.v-track { flex: 1; width: 100%; display: flex; justify-content: center; }
.vscroll.big .v-thumb { width: 21px; height: 106px; margin-top: 161px; background: #c8c8c8; }

/* bottom docks */
.bottom {
  height: 286px;
  margin-top: 5px;
  flex: none;
  display: flex;
  gap: 5px;
}
.cmd { width: 1036px; flex: none; display: flex; flex-direction: column; }
.cmd-output {
  height: 200px;
  flex: none;
  background: #fff;
  border-top: 2px solid #888;
  border-left: 2px solid #888;
  box-sizing: border-box;
  display: flex;
  flex-direction: column;
}
.cmd-body { flex: 1; display: flex; min-height: 0; }
.cmd-text {
  flex: 1;
  padding: 3px 0 0 2px;
  font-family: "Liberation Mono", monospace;
  font-size: 17.760px;
  line-height: 21px;
  color: #555;
  white-space: pre;
}
.vscroll.thin { width: 24px; margin-right: 2px; justify-content: space-between; padding: 8px 0; box-sizing: border-box; }
.hscroll.thin { height: 20px; justify-content: space-between; padding: 0 30px 0 8px; }
.cmd-input {
  height: 26px;
  flex: none;
  margin-top: 8px;
  background: #fff;
  border-bottom: 1px solid #bbb;
  box-sizing: border-box;
  padding-left: 10px;
  font-family: "Liberation Mono", monospace;
  font-size: 15px;
  line-height: 24px;
  color: #666;
}
.cmd-funcs {
  height: 25px;
  flex: none;
  margin-top: 2px;
  padding-left: 3px;
  background: #f3f3f3;
  border-bottom: 2px solid #aaa;
  font-family: "Liberation Mono", monospace;
  font-size: 17.760px;
  line-height: 23px;
  color: #444;
  white-space: pre;
}
.memory { flex: 1; min-width: 0; display: flex; flex-direction: column; }
.memory .dock-head { margin-bottom: 2px; }
.mem-box { height: 228px; flex: none; display: flex; border-bottom: 1px solid #333; margin-left: 5px; box-sizing: border-box; }
.mem-main { flex: 1; min-width: 0; display: flex; flex-direction: column; background: #fff; border-left: 1px solid #bbb; }
.mem-addr {
  height: 51px;
  flex: none;
  display: flex;
  align-items: center;
  background: #f0f0f0;
  border-bottom: 2px solid #ccc;
  box-sizing: border-box;
  padding: 2px 0 0 10px;
}
.mem-addr label { font-size: 14px; letter-spacing: -0.300px; color: #333; width: 62px; flex: none; }
.addr-input {
  width: 513px;
  height: 26px;
  box-sizing: border-box;
  background: #fff;
  border: 1px solid #ccc;
  border-top: 2px solid #888;
  border-left: 2px solid #888;
  padding-left: 2px;
  font-size: 14px;
  letter-spacing: -0.300px;
  line-height: 22px;
  color: #333;
}
.lock {
  width: 30px;
  height: 32px;
  margin-left: 11px;
  border: 1px solid #777;
  box-sizing: border-box;
  display: flex;
  align-items: center;
  justify-content: center;
}
.lock svg { width: 18px; height: 22px; }
.mem-rows {
  flex: 1;
  overflow: hidden;
  padding: 0 0 0 19px;
  font-family: "Liberation Mono", monospace;
  font-size: 17.760px;
  line-height: 21.350px;
  color: #555;
  white-space: pre;
}
.vscroll.mem { width: 28px; padding: 11px 0 7px; gap: 4px; box-sizing: border-box; }
.vscroll.mem .v-thumb { width: 20px; height: 22px; background: #d0d0d0; }
.mem-tabs { height: 32px; flex: none; display: flex; padding-left: 7px; }
.mem-tabs .ltab { width: 156px; box-sizing: border-box; padding-left: 2px; gap: 3px; font-size: 14px; }
.mem-tabs .ltab.active { width: 110px; margin-left: 3px; margin-top: -1px; border-top-color: #f0f0f0; gap: 6px; }

/* status + taskbar */
.status {
  height: 29px;
  flex: none;
  margin-top: 1px;
  display: flex;
  align-items: center;
  background: #f0f0f0;
  border-bottom: 2px solid #777;
  box-sizing: border-box;
  font-size: 14px;
  color: #444;
}
.st { height: 100%; display: flex; align-items: center; box-sizing: border-box; border-left: 1px solid #ddd; white-space: nowrap; }
.sim { margin-left: 962px; width: 239px; padding-left: 7px; }
.t1s { width: 182px; padding-left: 20px; }
.ln { padding-left: 5px; }
.taskbar {
  flex: 1;
  display: flex;
  align-items: center;
  background: #f0f0f0;
}
.apps { display: flex; height: 100%; }
.app {
  position: relative;
  width: 50px;
  height: 100%;
  display: flex;
  align-items: center;
  justify-content: center;
}
.app ~ .gap { margin-left: 6px; }
.app.gap ~ .app { width: 50.600px; }
.app.gap { width: 50.600px; }
.app svg { width: 27px; height: 27px; margin-top: -4px; }
.app.running::after {
  content: "";
  position: absolute;
  left: 6px;
  right: 6px;
  bottom: 0;
  height: 3px;
  background: #0f8fc2;
}
.tray { margin-left: auto; display: flex; align-items: center; padding: 0 28px 4px 0; }
.tray-i { width: 24px; height: 24px; margin: 0 4px; flex: none; }
.tray-cn { width: 32px; text-align: center; font-family: "Noto Sans CJK SC", sans-serif; font-size: 20px; color: #777; }
.clock { width: 60px; text-align: center; font-size: 16px; color: #222; }
.tray-n { width: 24px; height: 24px; margin: 0 4px 0 15px; }

/* IME bar */
.ime {
  position: absolute;
  right: 0;
  top: 878px;
  display: flex;
  align-items: center;
}
.ime-logo { width: 46px; height: 46px; margin-right: -6px; z-index: 1; }
.ime-bar {
  width: 264px;
  height: 36px;
  background: #fff;
  display: flex;
  align-items: center;
  box-sizing: border-box;
  padding-left: 14.500px;
  gap: 11px;
  color: #1b6fd2;
  fill: #1b6fd2;
}
.ime-bar svg { width: 21px; height: 21px; flex: none; }
.ime-cn { font-family: "Noto Sans CJK SC", sans-serif; font-size: 19px; width: 20px; flex: none; }
.ime-p { font-family: "Liberation Sans", sans-serif; font-size: 18px; font-weight: 700; width: 21px; flex: none; }
</style>
